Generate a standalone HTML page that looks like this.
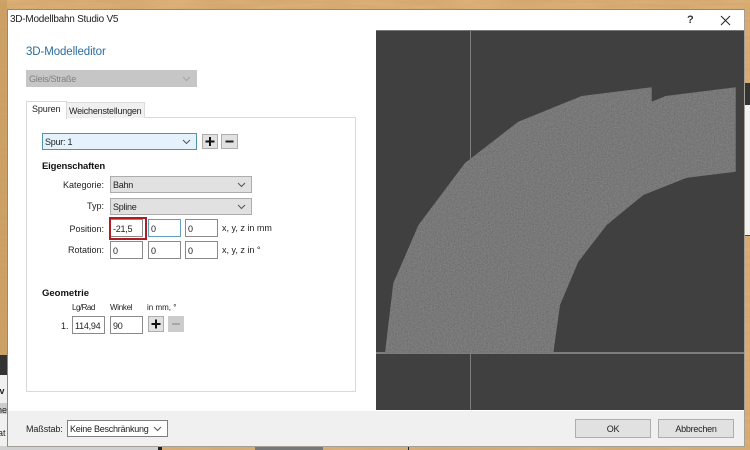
<!DOCTYPE html>
<html><head><meta charset="utf-8">
<style>
html,body{margin:0;padding:0;width:750px;height:450px;overflow:hidden;background:#d8b07a;}
body{position:relative;font-family:"Liberation Sans",sans-serif;font-size:9px;color:#222;filter:blur(.3px);}
.a{position:absolute;box-sizing:border-box;}
.t{position:absolute;white-space:nowrap;line-height:12px;}
.r{text-align:right;width:70px;}
.b{font-weight:bold;color:#111;font-size:9.5px;}
.in{position:absolute;box-sizing:border-box;height:18px;border:1px solid #8a8a8a;background:#fff;padding:1px 0 0 2px;line-height:16px;font-size:9px;letter-spacing:-.25px;}
.cb{position:absolute;box-sizing:border-box;border:1px solid #adadad;background:#e1e1e1;padding:1px 0 0 2px;line-height:15px;font-size:9px;letter-spacing:-.25px;white-space:nowrap;}
.cb svg{position:absolute;right:5px;top:5px;}
.btn{position:absolute;box-sizing:border-box;border:1px solid #adadad;background:#e1e1e1;text-align:center;letter-spacing:-.25px;}
</style></head><body>
<svg class="a" style="left:0;top:0" width="750" height="450">
<defs><filter id="w" x="0" y="0" width="100%" height="100%" color-interpolation-filters="sRGB"><feTurbulence type="fractalNoise" baseFrequency="0.02 0.25" numOctaves="3" seed="4"/><feColorMatrix values="0 0 0 0 .90  0 0 0 0 .72  0 0 0 0 .50  1.4 0 0 0 -.4"/></filter></defs>
<rect width="750" height="450" fill="#d3a96f"/>
<rect width="750" height="450" filter="url(#w)" opacity=".7"/>
<rect x="0" y="0" width="7" height="450" fill="#c49a5e" opacity=".6"/>
</svg>
<!-- underlying windows -->
<div class="a" style="left:0;top:355px;width:8px;height:20px;background:#333"></div>
<div class="a" style="left:0;top:375px;width:8px;height:72px;background:#f0f0f0"></div>
<div class="a" style="left:0;top:403px;width:8px;height:11px;background:#ccc"></div>
<div class="t" style="left:-3px;top:385px;font-weight:bold;font-size:9px">iv</div>
<div class="t" style="left:-3px;top:404px;font-size:9px">ne</div>
<div class="t" style="left:-2px;top:427px;font-size:9px">at</div>
<div class="a" style="left:0;top:446px;width:158px;height:4px;background:#d0d0d0"></div>
<div class="a" style="left:158px;top:446px;width:4px;height:4px;background:#222"></div>
<div class="a" style="left:255px;top:447px;width:68px;height:3px;background:#777"></div>
<div class="a" style="left:745px;top:83px;width:5px;height:22px;background:#333"></div>
<div class="a" style="left:745px;top:105px;width:5px;height:130px;background:#f2f2f2"></div>
<div class="a" style="left:745px;top:235px;width:5px;height:1px;background:#444"></div>
<div class="a" style="left:408px;top:446px;width:1px;height:4px;background:#222"></div>
<!-- dialog -->
<div class="a" style="left:7px;top:9px;width:738px;height:438px;background:#fff;border:1px solid #8f8a80;border-right-color:#a5a095;border-bottom-color:#a5a095"></div>
<div class="a" style="left:8px;top:411px;width:736px;height:35px;background:#f0f0f0"></div>
<div class="t" style="left:10px;top:14px;font-size:10px;letter-spacing:-.25px;color:#222">3D-Modellbahn Studio V5</div>
<div class="t" style="left:687px;top:14px;font-size:11px;font-weight:bold;color:#333">?</div>
<svg class="a" style="left:720px;top:15px" width="11" height="11"><path d="M1 1L10 10M10 1L1 10" stroke="#222" stroke-width="1" fill="none"/></svg>
<div class="t" style="left:26px;top:46px;font-size:11.5px;letter-spacing:-.1px;color:#2a6d9c">3D-Modelleditor</div>
<div class="cb" style="left:26px;top:70px;width:171px;height:17px;background:#c6c6c6;border-color:#c6c6c6;color:#808080">Gleis/Straße<svg width="9" height="6"><path d="M1 1L4.5 4.5L8 1" stroke="#a5a5a5" fill="none"/></svg></div>
<!-- tabs -->
<div class="a" style="left:26px;top:117px;width:330px;height:275px;background:#fff;border:1px solid #d9d9d9"></div>
<div class="a" style="left:66px;top:102px;width:79px;height:16px;background:#f0f0f0;border:1px solid #dcdcdc;border-bottom:0"></div>
<div class="a" style="left:26px;top:101px;width:41px;height:18px;background:#fff;border:1px solid #d9d9d9;border-bottom:0"></div>
<div class="t" style="left:32px;top:103px;letter-spacing:-.1px">Spuren</div>
<div class="t" style="left:69px;top:105px;letter-spacing:-.2px">Weichenstellungen</div>
<!-- spur -->
<div class="cb" style="left:42px;top:133px;width:155px;height:17px;background:#e4f2fb;border-color:#4f93ac">Spur: 1<svg width="9" height="6"><path d="M1 1L4.5 4.5L8 1" stroke="#555" fill="none"/></svg></div>
<div class="btn" style="left:202px;top:134px;width:16px;height:15px"><svg width="14" height="13" style="display:block"><path d="M7 2V11M2.5 6.5H11.5" stroke="#111" stroke-width="2" fill="none"/></svg></div>
<div class="btn" style="left:221px;top:134px;width:17px;height:15px"><svg width="15" height="13" style="display:block"><path d="M3.5 6.5H11.5" stroke="#222" stroke-width="2" fill="none"/></svg></div>
<div class="t b" style="left:42px;top:161px;letter-spacing:-.15px">Eigenschaften</div>
<div class="t r" style="left:34px;top:179px">Kategorie:</div>
<div class="cb" style="left:110px;top:176px;width:142px;height:17px">Bahn<svg width="9" height="6"><path d="M1 1L4.5 4.5L8 1" stroke="#555" fill="none"/></svg></div>
<div class="t r" style="left:34px;top:200px">Typ:</div>
<div class="cb" style="left:110px;top:198px;width:142px;height:17px">Spline<svg width="9" height="6"><path d="M1 1L4.5 4.5L8 1" stroke="#555" fill="none"/></svg></div>
<div class="t r" style="left:34px;top:223px">Position:</div>
<div class="in" style="left:110px;top:219px;width:33px">-21,5</div>
<div class="a" style="left:109px;top:217px;width:38px;height:23px;border:2px solid #b01c24"></div>
<div class="in" style="left:148px;top:219px;width:33px;border-color:#5f9fb8">0</div>
<div class="in" style="left:185px;top:219px;width:33px">0</div>
<div class="t" style="left:222px;top:222px">x, y, z in mm</div>
<div class="t r" style="left:34px;top:244px">Rotation:</div>
<div class="in" style="left:110px;top:241px;width:33px">0</div>
<div class="in" style="left:148px;top:241px;width:33px">0</div>
<div class="in" style="left:185px;top:241px;width:33px">0</div>
<div class="t" style="left:222px;top:244px">x, y, z in °</div>
<!-- geometrie -->
<div class="t b" style="left:42px;top:288px">Geometrie</div>
<div class="t" style="left:72px;top:302px;font-size:8px;letter-spacing:-.5px">Lg/Rad</div>
<div class="t" style="left:110px;top:302px;font-size:8px;letter-spacing:-.3px">Winkel</div>
<div class="t" style="left:147px;top:302px;font-size:8px">in mm, °</div>
<div class="t" style="left:61px;top:320px">1.</div>
<div class="in" style="left:72px;top:316px;width:33px;padding-left:2px">114,94</div>
<div class="in" style="left:110px;top:316px;width:33px">90</div>
<div class="btn" style="left:148px;top:316px;width:16px;height:16px"><svg width="14" height="14" style="display:block"><path d="M7 2.5V11.5M2.5 7H11.5" stroke="#111" stroke-width="2" fill="none"/></svg></div>
<div class="btn" style="left:168px;top:316px;width:16px;height:16px;background:#ccc;border-color:#ccc"><svg width="14" height="14" style="display:block"><path d="M3 7H11" stroke="#999" stroke-width="1.5" fill="none"/></svg></div>
<!-- viewport -->
<div class="a" style="left:376px;top:30px;width:368px;height:380px;background:#404040;border-top:1px solid #777"></div>
<div class="a" style="left:469.5px;top:31px;width:1.5px;height:132px;background:#7d7d7d"></div>
<div class="a" style="left:469.5px;top:352px;width:1.5px;height:58px;background:#7d7d7d"></div>
<div class="a" style="left:376px;top:352px;width:368px;height:1.5px;background:#7d7d7d"></div>
<svg class="a" style="left:0;top:0" width="750" height="450">
<defs><filter id="n" x="0" y="0" width="100%" height="100%" color-interpolation-filters="sRGB"><feTurbulence type="fractalNoise" baseFrequency="0.7" numOctaves="2" seed="7"/><feColorMatrix type="saturate" values="0"/><feComponentTransfer><feFuncR type="linear" slope=".7" intercept=".13"/><feFuncG type="linear" slope=".7" intercept=".13"/><feFuncB type="linear" slope=".7" intercept=".13"/><feFuncA type="linear" slope="0" intercept=".3"/></feComponentTransfer><feComposite in2="SourceGraphic" operator="in"/></filter></defs>
<polygon points="385,353 393.3,283.3 418.5,225 465,163 518.3,121.7 581.7,96 651.7,87.3 651.7,101.7 665.7,96 735.7,87.3 735.7,171.7 686.7,177.7 643.3,195 606.7,225 578.3,261.7 560,305 553.3,353" fill="#787878"/>
<polygon points="385,353 393.3,283.3 418.5,225 465,163 518.3,121.7 581.7,96 651.7,87.3 651.7,101.7 665.7,96 735.7,87.3 735.7,171.7 686.7,177.7 643.3,195 606.7,225 578.3,261.7 560,305 553.3,353" fill="#787878" filter="url(#n)"/>
</svg>
<!-- footer -->
<div class="t" style="left:26px;top:423px;letter-spacing:-.1px">Maßstab:</div>
<div class="cb" style="left:67px;top:420px;width:101px;height:17px;background:#fff;border-color:#7f7f7f">Keine Beschränkung<svg width="9" height="6"><path d="M1 1L4.5 4.5L8 1" stroke="#555" fill="none"/></svg></div>
<div class="btn" style="left:575px;top:419px;width:76px;height:19px;line-height:18px">OK</div>
<div class="btn" style="left:658px;top:419px;width:76px;height:19px;line-height:18px">Abbrechen</div>
</body></html>
